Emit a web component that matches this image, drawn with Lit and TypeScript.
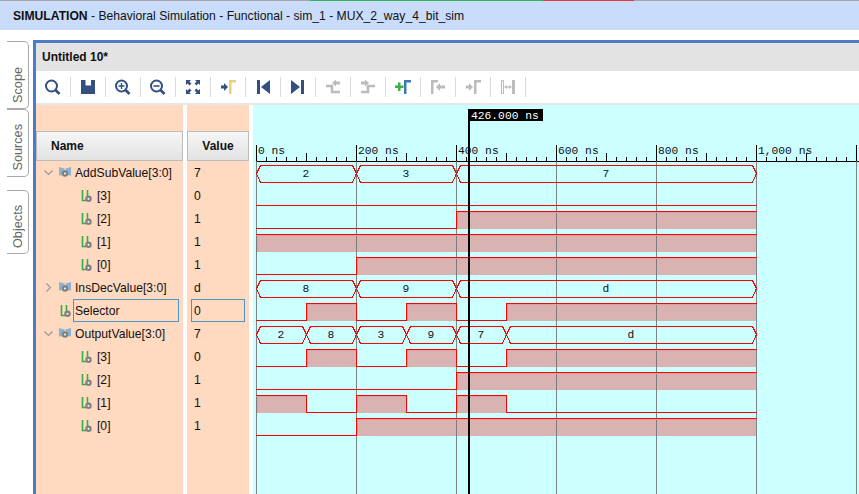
import { LitElement, html, svg, css } from 'lit';
import { customElement } from 'lit/decorators.js';

const NAVY = '#33507f';
const GRAY = '#bcbcbc';

// one row per signal, names and values in the same order as the waves
const ROWS = [
  { name: 'AddSubValue[3:0]', value: '7', kind: 'bus', open: true },
  { name: '[3]', value: '0', kind: 'sub' },
  { name: '[2]', value: '1', kind: 'sub' },
  { name: '[1]', value: '1', kind: 'sub' },
  { name: '[0]', value: '1', kind: 'sub' },
  { name: 'InsDecValue[3:0]', value: 'd', kind: 'bus', open: false },
  { name: 'Selector', value: '0', kind: 'selected' },
  { name: 'OutputValue[3:0]', value: '7', kind: 'bus', open: true },
  { name: '[3]', value: '0', kind: 'sub' },
  { name: '[2]', value: '1', kind: 'sub' },
  { name: '[1]', value: '1', kind: 'sub' },
  { name: '[0]', value: '1', kind: 'sub' },
];

const BUSES: [number, [number, number, string][]][] = [
  [0, [[256, 356, '2'], [356, 456, '3'], [456, 756, '7']]],
  [5, [[256, 356, '8'], [356, 456, '9'], [456, 756, 'd']]],
  [7, [[256, 306, '2'], [306, 356, '8'], [356, 406, '3'], [406, 456, '9'], [456, 506, '7'], [506, 756, 'd']]],
];

// levels per 100 ns slot (50px)
const BITS: [number, string][] = [
  [1, '0000000000'],
  [2, '0000111111'],
  [3, '1111111111'],
  [4, '0011111111'],
  [6, '0101011111'],
  [8, '0101011111'],
  [9, '0000111111'],
  [10, '1010100000'],
  [11, '0011111111'],
];

const RULER = [
  [256, '0 ns'], [356, '200 ns'], [456, '400 ns'], [556, '600 ns'], [656, '800 ns'], [756, '1,000 ns'],
] as [number, string][];

const gamma = (c: string) => svg`<path fill=${c} d="M11 3h7v2.500h-4.500V17H11z"/>`;
const glass = (inner: unknown) => svg`
  <circle cx="8.500" cy="9" r="5.500" fill="none" stroke=${NAVY} stroke-width="2"/>
  <path d="M12.500 13l4 4" stroke=${NAVY} stroke-width="2.600" fill="none"/>${inner}`;

const TOOLS = [
  glass(''),
  svg`<path fill=${NAVY} d="M3 3h14v14H3z"/><path fill="#fff" d="M7.500 3H13v5.500H7.500z"/>`,
  glass(svg`<path d="M5.500 9h6M8.500 6v6" stroke=${NAVY} stroke-width="1.400"/>`),
  glass(svg`<path d="M5.500 9h6" stroke=${NAVY} stroke-width="1.600"/>`),
  svg`<g fill=${NAVY}><path d="M3 3h5L6.400 4.600l2 2-1.800 1.800-2-2L3 8z"/><path d="M17 3v5l-1.600-1.600-2 2-1.800-1.800 2-2L12 3z"/><path d="M3 17v-5l1.600 1.600 2-2 1.800 1.800-2 2L8 17z"/><path d="M17 17h-5l1.600-1.600-2-2 1.800-1.800 2 2L17 12z"/></g>`,
  svg`<path fill=${NAVY} d="M3 8.500h3V6l4 4-4 4v-2.500H3z"/>${gamma('#e6d27a')}`,
  svg`<path fill=${NAVY} d="M4 3h3v14H4zM17 3v14l-9-7z"/>`,
  svg`<path fill=${NAVY} d="M13 3h3v14h-3zM3 3v14l9-7z"/>`,
  svg`<path fill="none" stroke=${GRAY} stroke-width="2.500" d="M3 9h6v6h8"/><path fill=${GRAY} d="M9 6l4-3.500v2h4v3h-4v2z"/>`,
  svg`<path fill="none" stroke=${GRAY} stroke-width="2.500" d="M3 15h7V9h7"/><path fill=${GRAY} d="M11 6L7 2.500v2H3v3h4v2z"/>`,
  svg`<path fill="#3fae49" d="M5 8.500V5.500h2.500v3h3V11h-3v3H5v-3H2V8.500z"/>${gamma('#3b78b5')}`,
  svg`<path fill=${GRAY} d="M3 3h7v2.500H5.500V17H3zM8 10l4-4v2.500h5v3h-5V14z"/>`,
  svg`<path fill=${GRAY} d="M3 8.500h3V6l4 4-4 4v-2.500H3z"/>${gamma(GRAY)}`,
  svg`<path fill="none" stroke=${GRAY} d="M3.500 3.500h2v13h-2z"/><path fill=${GRAY} d="M14 3h3v14h-3zM6.500 9.500h7v1h-7z"/><path fill=${GRAY} d="M6.500 10l2.500-2v4zM13.500 10l-2.500-2v4z"/>`,
];

const busIcon = html`<svg class="icon" viewBox="0 0 12 12">
  <path fill="#8db2cf" d="M0 0l5.500 1.500V8L0 8.500z"/>
  <path fill="#8db2cf" d="M12 0L6.500 1.500V8l5.500.5z"/>
  <circle cx="6" cy="6.500" r="3.200" fill="#808080"/><circle cx="6" cy="6.500" r="1.100" fill="#eee"/>
</svg>`;

const bitIcon = html`<svg class="icon" viewBox="0 0 12 12">
  <path fill="none" stroke="#35ad46" stroke-width="1.600" d="M1.500 0v10.500H5"/>
  <path fill="none" stroke="#35ad46" stroke-width="1.600" d="M6.500 0v6"/>
  <circle cx="7.500" cy="8.800" r="3.200" fill="#808080"/><circle cx="7.500" cy="8.800" r="1.100" fill="#eee"/>
</svg>`;

@customElement('app-root')
export class AppRoot extends LitElement {
  static styles = css`
    :host {
      display: block;
      width: 859px;
      height: 494px;
      overflow: hidden;
      background: #fff;
      font-family: "Liberation Sans", Arial, sans-serif;
      font-size: 12.150px;
      color: #111;
    }
    .strip { display: flex; height: 1px; background: #a6a6a6; }
    .strip i { display: block; height: 1px; }
    .strip .gap { width: 310px; }
    .strip .green { width: 233px; background: #2fb457; }
    .strip .red { width: 91px; background: #e23b3b; }
    .title {
      height: 29px;
      background: #c9dcfb;
      padding-left: 13px;
      display: flex;
      align-items: center;
      white-space: pre;
    }
    .title b { font-weight: bold; }
    .main { display: flex; height: 464px; margin-top: 10px; }
    .tabs { width: 33px; flex: none; padding-top: 1px; box-sizing: border-box; }
    .tab {
      box-sizing: border-box;
      width: 22px;
      height: 68px;
      margin-left: 7px;
      border: 1px solid #a9a9a9;
      border-left: none;
      border-radius: 0 5px 5px 0;
      display: flex;
      flex-direction: column;
      align-items: center;
      justify-content: flex-end;
      padding-bottom: 5px;
      color: #666;
      font-size: 12.700px;
    }
    .tab.objects { height: 64px; margin-top: 13px; }
    .tab span { writing-mode: vertical-rl; transform: rotate(180deg); }
    .window {
      flex: 1;
      min-width: 0;
      border-left: 3px solid #4a7cc9;
      border-top: 3px solid #4a7cc9;
      display: flex;
      flex-direction: column;
    }
    .head {
      height: 28px;
      background: #e3e3e3;
      font-weight: bold;
      font-size: 12px;
      padding-left: 6px;
      display: flex;
      align-items: center;
    }
    .toolbar {
      height: 32px;
      display: flex;
      align-items: center;
      border-bottom: 2px solid #e6e6e6;
    }
    .tool {
      box-sizing: border-box;
      width: 35px;
      height: 20px;
      display: flex;
      justify-content: center;
      align-items: center;
      border-right: 1px solid #dcdcdc;
    }
    .tool svg { width: 20px; height: 20px; flex: none; }
    .body { flex: 1; display: flex; min-height: 0; }
    .col { background: #ffd9c0; flex: none; }
    .names { width: 147px; margin-right: 4px; }
    .values { width: 62px; margin-right: 4px; }
    .hdr {
      box-sizing: border-box;
      height: 30px;
      margin-top: 26px;
      background: linear-gradient(#f6f6f6, #e2e2e2);
      border: 1px solid #bcbcbc;
      font-weight: bold;
      font-size: 12px;
      display: flex;
      align-items: center;
    }
    .names .hdr { padding-left: 14px; }
    .values .hdr { justify-content: center; }
    .row {
      box-sizing: border-box;
      height: 23px;
      display: flex;
      align-items: center;
      white-space: nowrap;
    }
    .names .row { padding-left: 8px; }
    .names .row.sub { padding-left: 45px; }
    .values .row { padding-left: 7px; }
    .chev { width: 15px; flex: none; display: flex; }
    .chev svg { width: 9px; height: 9px; }
    .icon { width: 12px; height: 12px; flex: none; margin-right: 4px; }
    .row.selected .chev { width: 16px; }
    .row.selected .icon { margin-right: 1px; }
    .box {
      box-sizing: border-box;
      height: 23px;
      border: 1px solid #4d94c9;
      display: flex;
      align-items: center;
      padding-left: 1px;
    }
    .names .box { width: 106px; }
    .values .row.selected { padding-left: 4px; }
    .values .box { width: 54px; padding-left: 2px; }
    .wave { flex: 1; min-width: 0; background: #ccffff; }
    .wave svg { display: block; }
    .wave text { font-family: "Liberation Mono", "Courier New", monospace; font-size: 11.300px; fill: #111; }
    .wave text.center { text-anchor: middle; }
    .wave text.now { fill: #fff; }
  `;

  renderRow(r: (typeof ROWS)[number]) {
    const chev = r.kind === 'bus'
      ? html`<span class="chev"><svg viewBox="0 0 9 9"><path fill="none" stroke="#999" stroke-width="1.200"
          d=${r.open ? 'M.5 2.500l4 4 4-4' : 'M2.500 .5l4 4-4 4'}/></svg></span>`
      : r.kind === 'selected' ? html`<span class="chev"></span>` : '';
    const icon = r.kind === 'bus' ? busIcon : bitIcon;
    return html`<div class="row ${r.kind}">${chev}${icon}${r.kind === 'selected'
      ? html`<span class="box">${r.name}</span>` : html`<span>${r.name}</span>`}</div>`;
  }

  renderRuler() {
    const ticks = [];
    for (let x = 256; x < 859; x += 10) {
      const major = (x - 256) % 100 === 0;
      const mid = (x - 256) % 50 === 0;
      ticks.push(svg`<path d="M${x + 0.5} ${major ? 145 : mid ? 153 : 157}V161"/>`);
    }
    return svg`
      <g stroke="#000" fill="none" shape-rendering="crispEdges">
        <path d="M256 161.500H859"/>${ticks}
      </g>
      ${RULER.map(([x, t]) => svg`<text x=${x + 2} y="154">${t}</text>`)}`;
  }

  renderBits() {
    const fills = [];
    const lines = [];
    for (const [row, levels] of BITS) {
      const low = 182 + 23 * row;
      const high = low - 17;
      let d = `M256 ${(levels[0] === '1' ? high : low) + 0.5}`;
      for (let i = 0; i < levels.length; i++) {
        const x = 256 + 50 * i;
        const on = levels[i] === '1';
        if (i > 0 && levels[i] !== levels[i - 1]) d += `V${(on ? high : low) + 0.5}`;
        d += `H${x + 50.5}`;
        if (on) {
          const first = i === 0 || levels[i - 1] === '0';
          fills.push(svg`<rect x=${x} y=${high} width="50" height="18" fill="#d9b2b2"/>`);
          lines.push(svg`<rect x=${x} y=${high + 1} width="50" height="1" fill="#e59c9c"/>`);
          if (first) lines.push(svg`<rect x=${x + 1} y=${high + 1} width="1" height="17" fill="#e59c9c"/>`);
        }
      }
      lines.push(svg`<path d=${d} fill="none" stroke="#ff0000"/>`);
    }
    return { fills, lines };
  }

  renderBuses() {
    return BUSES.map(([row, segs]) => {
      const top = 165 + 23 * row;
      const bot = top + 17;
      const mid = top + 8.5;
      return segs.map(([a, b, t]) => svg`
        <path fill="none" stroke="#ff0000" shape-rendering="crispEdges"
          d="M${a + 0.5} ${mid}L${a + 4.5} ${top + 0.5}H${b - 3.5}L${b + 0.5} ${mid}L${b - 3.5} ${bot + 0.5}H${a + 4.5}Z"/>
        <text class="center" x=${(a + b) / 2} y=${top + 12}>${t}</text>`);
    });
  }

  render() {
    const { fills, lines } = this.renderBits();
    return html`
      <div class="strip"><i class="gap"></i><i class="green"></i><i class="red"></i></div>
      <div class="title"><span><b>SIMULATION</b> - Behavioral Simulation - Functional - sim_1 - MUX_2_way_4_bit_sim</span></div>
      <div class="main">
        <div class="tabs">
          <div class="tab"><span>Scope</span></div>
          <div class="tab"><span>Sources</span></div>
          <div class="tab objects"><span>Objects</span></div>
        </div>
        <div class="window">
          <div class="head">Untitled 10*</div>
          <div class="toolbar">
            ${TOOLS.map((t) => html`<div class="tool"><svg viewBox="0 0 20 20">${t}</svg></div>`)}
          </div>
          <div class="body">
            <div class="col names">
              <div class="hdr">Name</div>
              ${ROWS.map((r) => this.renderRow(r))}
            </div>
            <div class="col values">
              <div class="hdr">Value</div>
              ${ROWS.map((r) => html`<div class="row ${r.kind}">${r.kind === 'selected'
                ? html`<span class="box">${r.value}</span>` : r.value}</div>`)}
            </div>
            <div class="wave">
              <svg width="606" height="389" viewBox="253 105 606 389">
                ${this.renderRuler()}
                <g shape-rendering="crispEdges">${fills}</g>
                <g stroke="#6f6f6f" stroke-opacity="0.85" shape-rendering="crispEdges">
                  ${[256, 356, 456, 556, 656, 756, 856].map((x) => svg`<path d="M${x + 0.5} 161V494"/>`)}
                </g>
                <g shape-rendering="crispEdges">${lines}</g>
                ${this.renderBuses()}
                <rect x="468" y="109" width="2" height="385" fill="#000"/>
                <rect x="468" y="109" width="75" height="12" fill="#000"/>
                <text class="now" x="471" y="118.500">426.000 ns</text>
              </svg>
            </div>
          </div>
        </div>
      </div>
    `;
  }
}
